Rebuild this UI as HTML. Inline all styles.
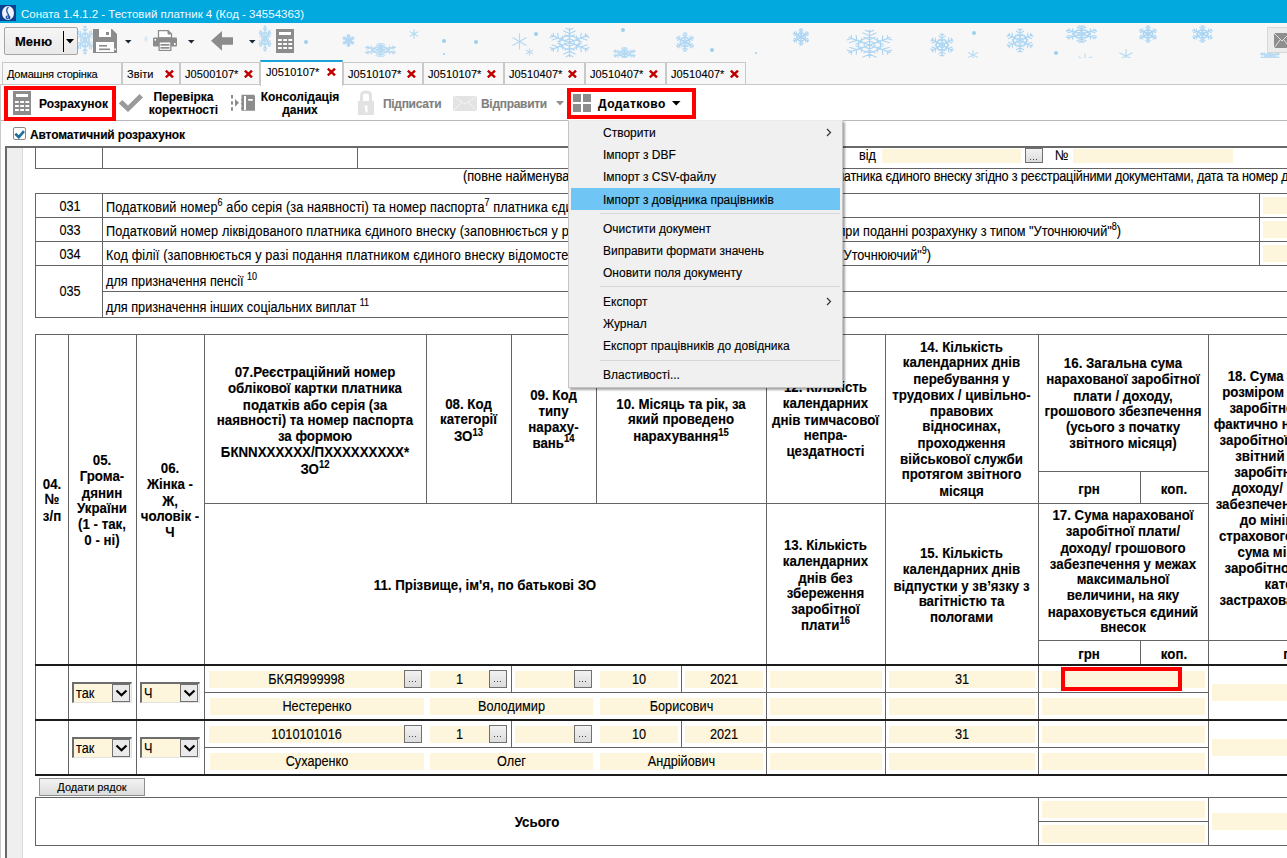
<!DOCTYPE html><html><head><meta charset="utf-8"><style>*{box-sizing:border-box;margin:0;padding:0}
html,body{width:1287px;height:858px;overflow:hidden;background:#fff;font-family:"Liberation Sans",sans-serif;color:#000}
#pg{position:relative;width:1287px;height:858px;overflow:hidden;background:#fff}
.a{position:absolute}
.t{position:absolute;white-space:nowrap}
.tab{position:absolute;top:62px;height:23px;border:1px solid #c9c9c9;border-bottom:none;background:#f8f8f8;font-size:11px;color:#000;letter-spacing:0.1px}
.tab span{position:absolute;top:5px}
.tab svg{position:absolute;top:7px}
.hl{position:absolute;background:#646464;height:1px}
.vl{position:absolute;background:#646464;width:1px}
.hk{position:absolute;background:#1c1c1c;height:2px}
.y{position:absolute;background:#fdf5dc}
.ct{position:absolute;text-align:center;font-weight:bold;font-size:13px;line-height:16px;white-space:nowrap}
.mi{position:absolute;left:603px;font-size:12px;white-space:nowrap;line-height:14px}
.btn{position:absolute;border:1px solid #9a9a9a;border-radius:2px;background:linear-gradient(#f4f4f4,#dedede)}
.dd{position:absolute;font-size:10px;color:#333;text-align:center;line-height:10px}
.tl{position:absolute;font-weight:bold;font-size:12px;white-space:nowrap;line-height:13px}
#pg div{-webkit-text-stroke:0.12px currentColor}
#pg div.ttl{-webkit-text-stroke:0}
</style></head><body><div id="pg">
<div class="a" style="left:0;top:0;width:1287px;height:23px;background:#01a9de"></div>
<div class="a" style="left:0;top:5px;width:16px;height:16px;background:#0d3f8f"></div>
<svg class="a" style="left:0;top:5px" width="16" height="16"><ellipse cx="8" cy="8" rx="6" ry="7" fill="#eef2fa"/><path d="M8.5 2C6 4 6 6 8 9C9.5 11 9 13.5 7.5 13.5C5.5 13.5 5.8 10.8 8 10.8C10 10.8 10.5 13 9 14" stroke="#1e56a8" stroke-width="1.3" fill="none"/></svg>
<div class="t ttl" style="left:21px;top:8px;font-size:11.5px;line-height:13px;color:#f2fbff">Соната 1.4.1.2 - Тестовий платник 4 (Код - 34554363)</div>
<div class="a" style="left:0;top:23px;width:1287px;height:62px;background:#f7f7f7"></div>
<div class="a" style="left:0;top:23px;width:1287px;height:35px;overflow:hidden">
<svg class="a" style="left:76.0px;top:2.0px;opacity:0.8" width="18.0" height="30.0" viewBox="-10.5 -10.5 21 21" preserveAspectRatio="none"><path d="M0 0L0.00 -10.00M0.00 -3.50l2.46 -1.72M0.00 -3.50l-2.46 -1.72M0.00 -6.00l2.87 -2.01M0.00 -6.00l-2.87 -2.01M0.00 -8.50l1.80 -1.26M0.00 -8.50l-1.80 -1.26M0 0L-8.66 -5.00M-3.03 -1.75l-0.26 -2.99M-3.03 -1.75l-2.72 1.27M-5.20 -3.00l-0.31 -3.49M-5.20 -3.00l-3.17 1.48M-7.36 -4.25l-0.19 -2.19M-7.36 -4.25l-1.99 0.93M0 0L-8.66 5.00M-3.03 1.75l-2.72 -1.27M-3.03 1.75l-0.26 2.99M-5.20 3.00l-3.17 -1.48M-5.20 3.00l-0.31 3.49M-7.36 4.25l-1.99 -0.93M-7.36 4.25l-0.19 2.19M0 0L-0.00 10.00M-0.00 3.50l-2.46 1.72M-0.00 3.50l2.46 1.72M-0.00 6.00l-2.87 2.01M-0.00 6.00l2.87 2.01M-0.00 8.50l-1.80 1.26M-0.00 8.50l1.80 1.26M0 0L8.66 5.00M3.03 1.75l0.26 2.99M3.03 1.75l2.72 -1.27M5.20 3.00l0.31 3.49M5.20 3.00l3.17 -1.48M7.36 4.25l0.19 2.19M7.36 4.25l1.99 -0.93M0 0L8.66 -5.00M3.03 -1.75l2.72 1.27M3.03 -1.75l0.26 -2.99M5.20 -3.00l3.17 1.48M5.20 -3.00l0.31 -3.49M7.36 -4.25l1.99 0.93M7.36 -4.25l0.19 -2.19M0.00 -2.50L-2.17 -1.25L-2.17 1.25L-0.00 2.50L2.17 1.25L2.17 -1.25ZM0.00 -5.20L-4.50 -2.60L-4.50 2.60L-0.00 5.20L4.50 2.60L4.50 -2.60Z" stroke="#a3d2f3" stroke-width="1.1" fill="none" vector-effect="non-scaling-stroke"/></svg>
<svg class="a" style="left:258.0px;top:1.5px;opacity:0.8" width="14.0" height="27.0" viewBox="-10.5 -10.5 21 21" preserveAspectRatio="none"><path d="M0 0L0.00 -10.00M0.00 -3.50l2.46 -1.72M0.00 -3.50l-2.46 -1.72M0.00 -6.00l2.87 -2.01M0.00 -6.00l-2.87 -2.01M0.00 -8.50l1.80 -1.26M0.00 -8.50l-1.80 -1.26M0 0L-8.66 -5.00M-3.03 -1.75l-0.26 -2.99M-3.03 -1.75l-2.72 1.27M-5.20 -3.00l-0.31 -3.49M-5.20 -3.00l-3.17 1.48M-7.36 -4.25l-0.19 -2.19M-7.36 -4.25l-1.99 0.93M0 0L-8.66 5.00M-3.03 1.75l-2.72 -1.27M-3.03 1.75l-0.26 2.99M-5.20 3.00l-3.17 -1.48M-5.20 3.00l-0.31 3.49M-7.36 4.25l-1.99 -0.93M-7.36 4.25l-0.19 2.19M0 0L-0.00 10.00M-0.00 3.50l-2.46 1.72M-0.00 3.50l2.46 1.72M-0.00 6.00l-2.87 2.01M-0.00 6.00l2.87 2.01M-0.00 8.50l-1.80 1.26M-0.00 8.50l1.80 1.26M0 0L8.66 5.00M3.03 1.75l0.26 2.99M3.03 1.75l2.72 -1.27M5.20 3.00l0.31 3.49M5.20 3.00l3.17 -1.48M7.36 4.25l0.19 2.19M7.36 4.25l1.99 -0.93M0 0L8.66 -5.00M3.03 -1.75l2.72 1.27M3.03 -1.75l0.26 -2.99M5.20 -3.00l3.17 1.48M5.20 -3.00l0.31 -3.49M7.36 -4.25l1.99 0.93M7.36 -4.25l0.19 -2.19M0.00 -2.50L-2.17 -1.25L-2.17 1.25L-0.00 2.50L2.17 1.25L2.17 -1.25ZM0.00 -5.20L-4.50 -2.60L-4.50 2.60L-0.00 5.20L4.50 2.60L4.50 -2.60Z" stroke="#a3d2f3" stroke-width="1.1" fill="none" vector-effect="non-scaling-stroke"/></svg>
<svg class="a" style="left:144.0px;top:13.0px;opacity:0.4" width="4.0" height="6.0" viewBox="-10.5 -10.5 21 21" preserveAspectRatio="none"><path d="M0 0L0.00 -10.00M0 0L-8.66 -5.00M0 0L-8.66 5.00M0 0L-0.00 10.00M0 0L8.66 5.00M0 0L8.66 -5.00" stroke="#a3d2f3" stroke-width="1.1" fill="none" vector-effect="non-scaling-stroke"/></svg>
<svg class="a" style="left:341.5px;top:10.5px;opacity:0.85" width="13.0" height="13.0" viewBox="-10.5 -10.5 21 21" preserveAspectRatio="none"><path d="M0 0L0.00 -10.00M0.00 -3.50l2.46 -1.72M0.00 -3.50l-2.46 -1.72M0.00 -6.00l2.87 -2.01M0.00 -6.00l-2.87 -2.01M0.00 -8.50l1.80 -1.26M0.00 -8.50l-1.80 -1.26M0 0L-8.66 -5.00M-3.03 -1.75l-0.26 -2.99M-3.03 -1.75l-2.72 1.27M-5.20 -3.00l-0.31 -3.49M-5.20 -3.00l-3.17 1.48M-7.36 -4.25l-0.19 -2.19M-7.36 -4.25l-1.99 0.93M0 0L-8.66 5.00M-3.03 1.75l-2.72 -1.27M-3.03 1.75l-0.26 2.99M-5.20 3.00l-3.17 -1.48M-5.20 3.00l-0.31 3.49M-7.36 4.25l-1.99 -0.93M-7.36 4.25l-0.19 2.19M0 0L-0.00 10.00M-0.00 3.50l-2.46 1.72M-0.00 3.50l2.46 1.72M-0.00 6.00l-2.87 2.01M-0.00 6.00l2.87 2.01M-0.00 8.50l-1.80 1.26M-0.00 8.50l1.80 1.26M0 0L8.66 5.00M3.03 1.75l0.26 2.99M3.03 1.75l2.72 -1.27M5.20 3.00l0.31 3.49M5.20 3.00l3.17 -1.48M7.36 4.25l0.19 2.19M7.36 4.25l1.99 -0.93M0 0L8.66 -5.00M3.03 -1.75l2.72 1.27M3.03 -1.75l0.26 -2.99M5.20 -3.00l3.17 1.48M5.20 -3.00l0.31 -3.49M7.36 -4.25l1.99 0.93M7.36 -4.25l0.19 -2.19M0.00 -2.50L-2.17 -1.25L-2.17 1.25L-0.00 2.50L2.17 1.25L2.17 -1.25ZM0.00 -5.20L-4.50 -2.60L-4.50 2.60L-0.00 5.20L4.50 2.60L4.50 -2.60Z" stroke="#a3d2f3" stroke-width="1.1" fill="none" vector-effect="non-scaling-stroke"/></svg>
<svg class="a" style="left:362.5px;top:20.0px;opacity:0.8" width="35.0" height="14.0" viewBox="-10.5 -10.5 21 21" preserveAspectRatio="none"><path d="M0 0L0.00 -10.00M0.00 -3.50l2.46 -1.72M0.00 -3.50l-2.46 -1.72M0.00 -6.00l2.87 -2.01M0.00 -6.00l-2.87 -2.01M0.00 -8.50l1.80 -1.26M0.00 -8.50l-1.80 -1.26M0 0L-8.66 -5.00M-3.03 -1.75l-0.26 -2.99M-3.03 -1.75l-2.72 1.27M-5.20 -3.00l-0.31 -3.49M-5.20 -3.00l-3.17 1.48M-7.36 -4.25l-0.19 -2.19M-7.36 -4.25l-1.99 0.93M0 0L-8.66 5.00M-3.03 1.75l-2.72 -1.27M-3.03 1.75l-0.26 2.99M-5.20 3.00l-3.17 -1.48M-5.20 3.00l-0.31 3.49M-7.36 4.25l-1.99 -0.93M-7.36 4.25l-0.19 2.19M0 0L-0.00 10.00M-0.00 3.50l-2.46 1.72M-0.00 3.50l2.46 1.72M-0.00 6.00l-2.87 2.01M-0.00 6.00l2.87 2.01M-0.00 8.50l-1.80 1.26M-0.00 8.50l1.80 1.26M0 0L8.66 5.00M3.03 1.75l0.26 2.99M3.03 1.75l2.72 -1.27M5.20 3.00l0.31 3.49M5.20 3.00l3.17 -1.48M7.36 4.25l0.19 2.19M7.36 4.25l1.99 -0.93M0 0L8.66 -5.00M3.03 -1.75l2.72 1.27M3.03 -1.75l0.26 -2.99M5.20 -3.00l3.17 1.48M5.20 -3.00l0.31 -3.49M7.36 -4.25l1.99 0.93M7.36 -4.25l0.19 -2.19M0.00 -2.50L-2.17 -1.25L-2.17 1.25L-0.00 2.50L2.17 1.25L2.17 -1.25ZM0.00 -5.20L-4.50 -2.60L-4.50 2.60L-0.00 5.20L4.50 2.60L4.50 -2.60Z" stroke="#a3d2f3" stroke-width="1.1" fill="none" vector-effect="non-scaling-stroke"/></svg>
<svg class="a" style="left:409.0px;top:6.0px;opacity:0.8" width="10.0" height="10.0" viewBox="-10.5 -10.5 21 21" preserveAspectRatio="none"><path d="M0 0L0.00 -10.00M0 0L-8.66 -5.00M0 0L-8.66 5.00M0 0L-0.00 10.00M0 0L8.66 5.00M0 0L8.66 -5.00" stroke="#a3d2f3" stroke-width="1.1" fill="none" vector-effect="non-scaling-stroke"/></svg>
<svg class="a" style="left:510.5px;top:9.5px;opacity:0.8" width="17.0" height="17.0" viewBox="-10.5 -10.5 21 21" preserveAspectRatio="none"><path d="M0 0L0.00 -10.00M0 0L-8.66 -5.00M0 0L-8.66 5.00M0 0L-0.00 10.00M0 0L8.66 5.00M0 0L8.66 -5.00" stroke="#a3d2f3" stroke-width="1.1" fill="none" vector-effect="non-scaling-stroke"/></svg>
<svg class="a" style="left:524.5px;top:25.0px;opacity:0.7" width="9.0" height="8.0" viewBox="-10.5 -10.5 21 21" preserveAspectRatio="none"><path d="M0 0L0.00 -10.00M0 0L-8.66 -5.00M0 0L-8.66 5.00M0 0L-0.00 10.00M0 0L8.66 5.00M0 0L8.66 -5.00" stroke="#a3d2f3" stroke-width="1.1" fill="none" vector-effect="non-scaling-stroke"/></svg>
<svg class="a" style="left:546.5px;top:3.5px;opacity:0.9" width="45.0" height="31.0" viewBox="-10.5 -10.5 21 21" preserveAspectRatio="none"><path d="M0 0L0.00 -10.00M0.00 -3.50l2.46 -1.72M0.00 -3.50l-2.46 -1.72M0.00 -6.00l2.87 -2.01M0.00 -6.00l-2.87 -2.01M0.00 -8.50l1.80 -1.26M0.00 -8.50l-1.80 -1.26M0 0L-8.66 -5.00M-3.03 -1.75l-0.26 -2.99M-3.03 -1.75l-2.72 1.27M-5.20 -3.00l-0.31 -3.49M-5.20 -3.00l-3.17 1.48M-7.36 -4.25l-0.19 -2.19M-7.36 -4.25l-1.99 0.93M0 0L-8.66 5.00M-3.03 1.75l-2.72 -1.27M-3.03 1.75l-0.26 2.99M-5.20 3.00l-3.17 -1.48M-5.20 3.00l-0.31 3.49M-7.36 4.25l-1.99 -0.93M-7.36 4.25l-0.19 2.19M0 0L-0.00 10.00M-0.00 3.50l-2.46 1.72M-0.00 3.50l2.46 1.72M-0.00 6.00l-2.87 2.01M-0.00 6.00l2.87 2.01M-0.00 8.50l-1.80 1.26M-0.00 8.50l1.80 1.26M0 0L8.66 5.00M3.03 1.75l0.26 2.99M3.03 1.75l2.72 -1.27M5.20 3.00l0.31 3.49M5.20 3.00l3.17 -1.48M7.36 4.25l0.19 2.19M7.36 4.25l1.99 -0.93M0 0L8.66 -5.00M3.03 -1.75l2.72 1.27M3.03 -1.75l0.26 -2.99M5.20 -3.00l3.17 1.48M5.20 -3.00l0.31 -3.49M7.36 -4.25l1.99 0.93M7.36 -4.25l0.19 -2.19M0.00 -2.50L-2.17 -1.25L-2.17 1.25L-0.00 2.50L2.17 1.25L2.17 -1.25ZM0.00 -5.20L-4.50 -2.60L-4.50 2.60L-0.00 5.20L4.50 2.60L4.50 -2.60Z" stroke="#a3d2f3" stroke-width="1.1" fill="none" vector-effect="non-scaling-stroke"/></svg>
<svg class="a" style="left:611.5px;top:23.5px;opacity:0.8" width="25.0" height="13.0" viewBox="-10.5 -10.5 21 21" preserveAspectRatio="none"><path d="M0 0L0.00 -10.00M0.00 -3.50l2.46 -1.72M0.00 -3.50l-2.46 -1.72M0.00 -6.00l2.87 -2.01M0.00 -6.00l-2.87 -2.01M0.00 -8.50l1.80 -1.26M0.00 -8.50l-1.80 -1.26M0 0L-8.66 -5.00M-3.03 -1.75l-0.26 -2.99M-3.03 -1.75l-2.72 1.27M-5.20 -3.00l-0.31 -3.49M-5.20 -3.00l-3.17 1.48M-7.36 -4.25l-0.19 -2.19M-7.36 -4.25l-1.99 0.93M0 0L-8.66 5.00M-3.03 1.75l-2.72 -1.27M-3.03 1.75l-0.26 2.99M-5.20 3.00l-3.17 -1.48M-5.20 3.00l-0.31 3.49M-7.36 4.25l-1.99 -0.93M-7.36 4.25l-0.19 2.19M0 0L-0.00 10.00M-0.00 3.50l-2.46 1.72M-0.00 3.50l2.46 1.72M-0.00 6.00l-2.87 2.01M-0.00 6.00l2.87 2.01M-0.00 8.50l-1.80 1.26M-0.00 8.50l1.80 1.26M0 0L8.66 5.00M3.03 1.75l0.26 2.99M3.03 1.75l2.72 -1.27M5.20 3.00l0.31 3.49M5.20 3.00l3.17 -1.48M7.36 4.25l0.19 2.19M7.36 4.25l1.99 -0.93M0 0L8.66 -5.00M3.03 -1.75l2.72 1.27M3.03 -1.75l0.26 -2.99M5.20 -3.00l3.17 1.48M5.20 -3.00l0.31 -3.49M7.36 -4.25l1.99 0.93M7.36 -4.25l0.19 -2.19M0.00 -2.50L-2.17 -1.25L-2.17 1.25L-0.00 2.50L2.17 1.25L2.17 -1.25ZM0.00 -5.20L-4.50 -2.60L-4.50 2.60L-0.00 5.20L4.50 2.60L4.50 -2.60Z" stroke="#a3d2f3" stroke-width="1.1" fill="none" vector-effect="non-scaling-stroke"/></svg>
<svg class="a" style="left:675.0px;top:9.0px;opacity:0.85" width="20.0" height="20.0" viewBox="-10.5 -10.5 21 21" preserveAspectRatio="none"><path d="M0 0L0.00 -10.00M0.00 -3.50l2.46 -1.72M0.00 -3.50l-2.46 -1.72M0.00 -6.00l2.87 -2.01M0.00 -6.00l-2.87 -2.01M0.00 -8.50l1.80 -1.26M0.00 -8.50l-1.80 -1.26M0 0L-8.66 -5.00M-3.03 -1.75l-0.26 -2.99M-3.03 -1.75l-2.72 1.27M-5.20 -3.00l-0.31 -3.49M-5.20 -3.00l-3.17 1.48M-7.36 -4.25l-0.19 -2.19M-7.36 -4.25l-1.99 0.93M0 0L-8.66 5.00M-3.03 1.75l-2.72 -1.27M-3.03 1.75l-0.26 2.99M-5.20 3.00l-3.17 -1.48M-5.20 3.00l-0.31 3.49M-7.36 4.25l-1.99 -0.93M-7.36 4.25l-0.19 2.19M0 0L-0.00 10.00M-0.00 3.50l-2.46 1.72M-0.00 3.50l2.46 1.72M-0.00 6.00l-2.87 2.01M-0.00 6.00l2.87 2.01M-0.00 8.50l-1.80 1.26M-0.00 8.50l1.80 1.26M0 0L8.66 5.00M3.03 1.75l0.26 2.99M3.03 1.75l2.72 -1.27M5.20 3.00l0.31 3.49M5.20 3.00l3.17 -1.48M7.36 4.25l0.19 2.19M7.36 4.25l1.99 -0.93M0 0L8.66 -5.00M3.03 -1.75l2.72 1.27M3.03 -1.75l0.26 -2.99M5.20 -3.00l3.17 1.48M5.20 -3.00l0.31 -3.49M7.36 -4.25l1.99 0.93M7.36 -4.25l0.19 -2.19M0.00 -2.50L-2.17 -1.25L-2.17 1.25L-0.00 2.50L2.17 1.25L2.17 -1.25ZM0.00 -5.20L-4.50 -2.60L-4.50 2.60L-0.00 5.20L4.50 2.60L4.50 -2.60Z" stroke="#a3d2f3" stroke-width="1.1" fill="none" vector-effect="non-scaling-stroke"/></svg>
<svg class="a" style="left:792.0px;top:5.0px;opacity:0.9" width="18.0" height="18.0" viewBox="-10.5 -10.5 21 21" preserveAspectRatio="none"><path d="M0 0L0.00 -10.00M0.00 -3.50l2.46 -1.72M0.00 -3.50l-2.46 -1.72M0.00 -6.00l2.87 -2.01M0.00 -6.00l-2.87 -2.01M0.00 -8.50l1.80 -1.26M0.00 -8.50l-1.80 -1.26M0 0L-8.66 -5.00M-3.03 -1.75l-0.26 -2.99M-3.03 -1.75l-2.72 1.27M-5.20 -3.00l-0.31 -3.49M-5.20 -3.00l-3.17 1.48M-7.36 -4.25l-0.19 -2.19M-7.36 -4.25l-1.99 0.93M0 0L-8.66 5.00M-3.03 1.75l-2.72 -1.27M-3.03 1.75l-0.26 2.99M-5.20 3.00l-3.17 -1.48M-5.20 3.00l-0.31 3.49M-7.36 4.25l-1.99 -0.93M-7.36 4.25l-0.19 2.19M0 0L-0.00 10.00M-0.00 3.50l-2.46 1.72M-0.00 3.50l2.46 1.72M-0.00 6.00l-2.87 2.01M-0.00 6.00l2.87 2.01M-0.00 8.50l-1.80 1.26M-0.00 8.50l1.80 1.26M0 0L8.66 5.00M3.03 1.75l0.26 2.99M3.03 1.75l2.72 -1.27M5.20 3.00l0.31 3.49M5.20 3.00l3.17 -1.48M7.36 4.25l0.19 2.19M7.36 4.25l1.99 -0.93M0 0L8.66 -5.00M3.03 -1.75l2.72 1.27M3.03 -1.75l0.26 -2.99M5.20 -3.00l3.17 1.48M5.20 -3.00l0.31 -3.49M7.36 -4.25l1.99 0.93M7.36 -4.25l0.19 -2.19M0.00 -2.50L-2.17 -1.25L-2.17 1.25L-0.00 2.50L2.17 1.25L2.17 -1.25ZM0.00 -5.20L-4.50 -2.60L-4.50 2.60L-0.00 5.20L4.50 2.60L4.50 -2.60Z" stroke="#a3d2f3" stroke-width="1.1" fill="none" vector-effect="non-scaling-stroke"/></svg>
<svg class="a" style="left:843.5px;top:6.0px;opacity:0.9" width="51.0" height="32.0" viewBox="-10.5 -10.5 21 21" preserveAspectRatio="none"><path d="M0 0L0.00 -10.00M0.00 -3.50l2.46 -1.72M0.00 -3.50l-2.46 -1.72M0.00 -6.00l2.87 -2.01M0.00 -6.00l-2.87 -2.01M0.00 -8.50l1.80 -1.26M0.00 -8.50l-1.80 -1.26M0 0L-8.66 -5.00M-3.03 -1.75l-0.26 -2.99M-3.03 -1.75l-2.72 1.27M-5.20 -3.00l-0.31 -3.49M-5.20 -3.00l-3.17 1.48M-7.36 -4.25l-0.19 -2.19M-7.36 -4.25l-1.99 0.93M0 0L-8.66 5.00M-3.03 1.75l-2.72 -1.27M-3.03 1.75l-0.26 2.99M-5.20 3.00l-3.17 -1.48M-5.20 3.00l-0.31 3.49M-7.36 4.25l-1.99 -0.93M-7.36 4.25l-0.19 2.19M0 0L-0.00 10.00M-0.00 3.50l-2.46 1.72M-0.00 3.50l2.46 1.72M-0.00 6.00l-2.87 2.01M-0.00 6.00l2.87 2.01M-0.00 8.50l-1.80 1.26M-0.00 8.50l1.80 1.26M0 0L8.66 5.00M3.03 1.75l0.26 2.99M3.03 1.75l2.72 -1.27M5.20 3.00l0.31 3.49M5.20 3.00l3.17 -1.48M7.36 4.25l0.19 2.19M7.36 4.25l1.99 -0.93M0 0L8.66 -5.00M3.03 -1.75l2.72 1.27M3.03 -1.75l0.26 -2.99M5.20 -3.00l3.17 1.48M5.20 -3.00l0.31 -3.49M7.36 -4.25l1.99 0.93M7.36 -4.25l0.19 -2.19M0.00 -2.50L-2.17 -1.25L-2.17 1.25L-0.00 2.50L2.17 1.25L2.17 -1.25ZM0.00 -5.20L-4.50 -2.60L-4.50 2.60L-0.00 5.20L4.50 2.60L4.50 -2.60Z" stroke="#a3d2f3" stroke-width="1.1" fill="none" vector-effect="non-scaling-stroke"/></svg>
<svg class="a" style="left:929.0px;top:10.0px;opacity:0.9" width="26.0" height="24.0" viewBox="-10.5 -10.5 21 21" preserveAspectRatio="none"><path d="M0 0L0.00 -10.00M0.00 -3.50l2.46 -1.72M0.00 -3.50l-2.46 -1.72M0.00 -6.00l2.87 -2.01M0.00 -6.00l-2.87 -2.01M0.00 -8.50l1.80 -1.26M0.00 -8.50l-1.80 -1.26M0 0L-8.66 -5.00M-3.03 -1.75l-0.26 -2.99M-3.03 -1.75l-2.72 1.27M-5.20 -3.00l-0.31 -3.49M-5.20 -3.00l-3.17 1.48M-7.36 -4.25l-0.19 -2.19M-7.36 -4.25l-1.99 0.93M0 0L-8.66 5.00M-3.03 1.75l-2.72 -1.27M-3.03 1.75l-0.26 2.99M-5.20 3.00l-3.17 -1.48M-5.20 3.00l-0.31 3.49M-7.36 4.25l-1.99 -0.93M-7.36 4.25l-0.19 2.19M0 0L-0.00 10.00M-0.00 3.50l-2.46 1.72M-0.00 3.50l2.46 1.72M-0.00 6.00l-2.87 2.01M-0.00 6.00l2.87 2.01M-0.00 8.50l-1.80 1.26M-0.00 8.50l1.80 1.26M0 0L8.66 5.00M3.03 1.75l0.26 2.99M3.03 1.75l2.72 -1.27M5.20 3.00l0.31 3.49M5.20 3.00l3.17 -1.48M7.36 4.25l0.19 2.19M7.36 4.25l1.99 -0.93M0 0L8.66 -5.00M3.03 -1.75l2.72 1.27M3.03 -1.75l0.26 -2.99M5.20 -3.00l3.17 1.48M5.20 -3.00l0.31 -3.49M7.36 -4.25l1.99 0.93M7.36 -4.25l0.19 -2.19M0.00 -2.50L-2.17 -1.25L-2.17 1.25L-0.00 2.50L2.17 1.25L2.17 -1.25ZM0.00 -5.20L-4.50 -2.60L-4.50 2.60L-0.00 5.20L4.50 2.60L4.50 -2.60Z" stroke="#a3d2f3" stroke-width="1.1" fill="none" vector-effect="non-scaling-stroke"/></svg>
<svg class="a" style="left:967.0px;top:27.0px;opacity:0.7" width="12.0" height="10.0" viewBox="-10.5 -10.5 21 21" preserveAspectRatio="none"><path d="M0 0L0.00 -10.00M0 0L-8.66 -5.00M0 0L-8.66 5.00M0 0L-0.00 10.00M0 0L8.66 5.00M0 0L8.66 -5.00" stroke="#a3d2f3" stroke-width="1.1" fill="none" vector-effect="non-scaling-stroke"/></svg>
<svg class="a" style="left:1005.0px;top:4.5px;opacity:0.9" width="30.0" height="25.0" viewBox="-10.5 -10.5 21 21" preserveAspectRatio="none"><path d="M0 0L0.00 -10.00M0.00 -3.50l2.46 -1.72M0.00 -3.50l-2.46 -1.72M0.00 -6.00l2.87 -2.01M0.00 -6.00l-2.87 -2.01M0.00 -8.50l1.80 -1.26M0.00 -8.50l-1.80 -1.26M0 0L-8.66 -5.00M-3.03 -1.75l-0.26 -2.99M-3.03 -1.75l-2.72 1.27M-5.20 -3.00l-0.31 -3.49M-5.20 -3.00l-3.17 1.48M-7.36 -4.25l-0.19 -2.19M-7.36 -4.25l-1.99 0.93M0 0L-8.66 5.00M-3.03 1.75l-2.72 -1.27M-3.03 1.75l-0.26 2.99M-5.20 3.00l-3.17 -1.48M-5.20 3.00l-0.31 3.49M-7.36 4.25l-1.99 -0.93M-7.36 4.25l-0.19 2.19M0 0L-0.00 10.00M-0.00 3.50l-2.46 1.72M-0.00 3.50l2.46 1.72M-0.00 6.00l-2.87 2.01M-0.00 6.00l2.87 2.01M-0.00 8.50l-1.80 1.26M-0.00 8.50l1.80 1.26M0 0L8.66 5.00M3.03 1.75l0.26 2.99M3.03 1.75l2.72 -1.27M5.20 3.00l0.31 3.49M5.20 3.00l3.17 -1.48M7.36 4.25l0.19 2.19M7.36 4.25l1.99 -0.93M0 0L8.66 -5.00M3.03 -1.75l2.72 1.27M3.03 -1.75l0.26 -2.99M5.20 -3.00l3.17 1.48M5.20 -3.00l0.31 -3.49M7.36 -4.25l1.99 0.93M7.36 -4.25l0.19 -2.19M0.00 -2.50L-2.17 -1.25L-2.17 1.25L-0.00 2.50L2.17 1.25L2.17 -1.25ZM0.00 -5.20L-4.50 -2.60L-4.50 2.60L-0.00 5.20L4.50 2.60L4.50 -2.60Z" stroke="#a3d2f3" stroke-width="1.1" fill="none" vector-effect="non-scaling-stroke"/></svg>
<svg class="a" style="left:1063.5px;top:2.0px;opacity:0.9" width="35.0" height="18.0" viewBox="-10.5 -10.5 21 21" preserveAspectRatio="none"><path d="M0 0L0.00 -10.00M0.00 -3.50l2.46 -1.72M0.00 -3.50l-2.46 -1.72M0.00 -6.00l2.87 -2.01M0.00 -6.00l-2.87 -2.01M0.00 -8.50l1.80 -1.26M0.00 -8.50l-1.80 -1.26M0 0L-8.66 -5.00M-3.03 -1.75l-0.26 -2.99M-3.03 -1.75l-2.72 1.27M-5.20 -3.00l-0.31 -3.49M-5.20 -3.00l-3.17 1.48M-7.36 -4.25l-0.19 -2.19M-7.36 -4.25l-1.99 0.93M0 0L-8.66 5.00M-3.03 1.75l-2.72 -1.27M-3.03 1.75l-0.26 2.99M-5.20 3.00l-3.17 -1.48M-5.20 3.00l-0.31 3.49M-7.36 4.25l-1.99 -0.93M-7.36 4.25l-0.19 2.19M0 0L-0.00 10.00M-0.00 3.50l-2.46 1.72M-0.00 3.50l2.46 1.72M-0.00 6.00l-2.87 2.01M-0.00 6.00l2.87 2.01M-0.00 8.50l-1.80 1.26M-0.00 8.50l1.80 1.26M0 0L8.66 5.00M3.03 1.75l0.26 2.99M3.03 1.75l2.72 -1.27M5.20 3.00l0.31 3.49M5.20 3.00l3.17 -1.48M7.36 4.25l0.19 2.19M7.36 4.25l1.99 -0.93M0 0L8.66 -5.00M3.03 -1.75l2.72 1.27M3.03 -1.75l0.26 -2.99M5.20 -3.00l3.17 1.48M5.20 -3.00l0.31 -3.49M7.36 -4.25l1.99 0.93M7.36 -4.25l0.19 -2.19M0.00 -2.50L-2.17 -1.25L-2.17 1.25L-0.00 2.50L2.17 1.25L2.17 -1.25ZM0.00 -5.20L-4.50 -2.60L-4.50 2.60L-0.00 5.20L4.50 2.60L4.50 -2.60Z" stroke="#a3d2f3" stroke-width="1.1" fill="none" vector-effect="non-scaling-stroke"/></svg>
<svg class="a" style="left:1077.0px;top:30.0px;opacity:0.7" width="16.0" height="14.0" viewBox="-10.5 -10.5 21 21" preserveAspectRatio="none"><path d="M0 0L0.00 -10.00M0 0L-8.66 -5.00M0 0L-8.66 5.00M0 0L-0.00 10.00M0 0L8.66 5.00M0 0L8.66 -5.00" stroke="#a3d2f3" stroke-width="1.1" fill="none" vector-effect="non-scaling-stroke"/></svg>
<svg class="a" style="left:1118.0px;top:26.0px;opacity:0.8" width="16.0" height="14.0" viewBox="-10.5 -10.5 21 21" preserveAspectRatio="none"><path d="M0 0L0.00 -10.00M0 0L-8.66 -5.00M0 0L-8.66 5.00M0 0L-0.00 10.00M0 0L8.66 5.00M0 0L8.66 -5.00" stroke="#a3d2f3" stroke-width="1.1" fill="none" vector-effect="non-scaling-stroke"/></svg>
<svg class="a" style="left:1138.0px;top:2.0px;opacity:0.9" width="20.0" height="18.0" viewBox="-10.5 -10.5 21 21" preserveAspectRatio="none"><path d="M0 0L0.00 -10.00M0.00 -3.50l2.46 -1.72M0.00 -3.50l-2.46 -1.72M0.00 -6.00l2.87 -2.01M0.00 -6.00l-2.87 -2.01M0.00 -8.50l1.80 -1.26M0.00 -8.50l-1.80 -1.26M0 0L-8.66 -5.00M-3.03 -1.75l-0.26 -2.99M-3.03 -1.75l-2.72 1.27M-5.20 -3.00l-0.31 -3.49M-5.20 -3.00l-3.17 1.48M-7.36 -4.25l-0.19 -2.19M-7.36 -4.25l-1.99 0.93M0 0L-8.66 5.00M-3.03 1.75l-2.72 -1.27M-3.03 1.75l-0.26 2.99M-5.20 3.00l-3.17 -1.48M-5.20 3.00l-0.31 3.49M-7.36 4.25l-1.99 -0.93M-7.36 4.25l-0.19 2.19M0 0L-0.00 10.00M-0.00 3.50l-2.46 1.72M-0.00 3.50l2.46 1.72M-0.00 6.00l-2.87 2.01M-0.00 6.00l2.87 2.01M-0.00 8.50l-1.80 1.26M-0.00 8.50l1.80 1.26M0 0L8.66 5.00M3.03 1.75l0.26 2.99M3.03 1.75l2.72 -1.27M5.20 3.00l0.31 3.49M5.20 3.00l3.17 -1.48M7.36 4.25l0.19 2.19M7.36 4.25l1.99 -0.93M0 0L8.66 -5.00M3.03 -1.75l2.72 1.27M3.03 -1.75l0.26 -2.99M5.20 -3.00l3.17 1.48M5.20 -3.00l0.31 -3.49M7.36 -4.25l1.99 0.93M7.36 -4.25l0.19 -2.19M0.00 -2.50L-2.17 -1.25L-2.17 1.25L-0.00 2.50L2.17 1.25L2.17 -1.25ZM0.00 -5.20L-4.50 -2.60L-4.50 2.60L-0.00 5.20L4.50 2.60L4.50 -2.60Z" stroke="#a3d2f3" stroke-width="1.1" fill="none" vector-effect="non-scaling-stroke"/></svg>
<svg class="a" style="left:1190.5px;top:2.0px;opacity:0.9" width="23.0" height="18.0" viewBox="-10.5 -10.5 21 21" preserveAspectRatio="none"><path d="M0 0L0.00 -10.00M0.00 -3.50l2.46 -1.72M0.00 -3.50l-2.46 -1.72M0.00 -6.00l2.87 -2.01M0.00 -6.00l-2.87 -2.01M0.00 -8.50l1.80 -1.26M0.00 -8.50l-1.80 -1.26M0 0L-8.66 -5.00M-3.03 -1.75l-0.26 -2.99M-3.03 -1.75l-2.72 1.27M-5.20 -3.00l-0.31 -3.49M-5.20 -3.00l-3.17 1.48M-7.36 -4.25l-0.19 -2.19M-7.36 -4.25l-1.99 0.93M0 0L-8.66 5.00M-3.03 1.75l-2.72 -1.27M-3.03 1.75l-0.26 2.99M-5.20 3.00l-3.17 -1.48M-5.20 3.00l-0.31 3.49M-7.36 4.25l-1.99 -0.93M-7.36 4.25l-0.19 2.19M0 0L-0.00 10.00M-0.00 3.50l-2.46 1.72M-0.00 3.50l2.46 1.72M-0.00 6.00l-2.87 2.01M-0.00 6.00l2.87 2.01M-0.00 8.50l-1.80 1.26M-0.00 8.50l1.80 1.26M0 0L8.66 5.00M3.03 1.75l0.26 2.99M3.03 1.75l2.72 -1.27M5.20 3.00l0.31 3.49M5.20 3.00l3.17 -1.48M7.36 4.25l0.19 2.19M7.36 4.25l1.99 -0.93M0 0L8.66 -5.00M3.03 -1.75l2.72 1.27M3.03 -1.75l0.26 -2.99M5.20 -3.00l3.17 1.48M5.20 -3.00l0.31 -3.49M7.36 -4.25l1.99 0.93M7.36 -4.25l0.19 -2.19M0.00 -2.50L-2.17 -1.25L-2.17 1.25L-0.00 2.50L2.17 1.25L2.17 -1.25ZM0.00 -5.20L-4.50 -2.60L-4.50 2.60L-0.00 5.20L4.50 2.60L4.50 -2.60Z" stroke="#a3d2f3" stroke-width="1.1" fill="none" vector-effect="non-scaling-stroke"/></svg>
<svg class="a" style="left:1259.0px;top:27.0px;opacity:0.8" width="22.0" height="12.0" viewBox="-10.5 -10.5 21 21" preserveAspectRatio="none"><path d="M0 0L0.00 -10.00M0.00 -3.50l2.46 -1.72M0.00 -3.50l-2.46 -1.72M0.00 -6.00l2.87 -2.01M0.00 -6.00l-2.87 -2.01M0.00 -8.50l1.80 -1.26M0.00 -8.50l-1.80 -1.26M0 0L-8.66 -5.00M-3.03 -1.75l-0.26 -2.99M-3.03 -1.75l-2.72 1.27M-5.20 -3.00l-0.31 -3.49M-5.20 -3.00l-3.17 1.48M-7.36 -4.25l-0.19 -2.19M-7.36 -4.25l-1.99 0.93M0 0L-8.66 5.00M-3.03 1.75l-2.72 -1.27M-3.03 1.75l-0.26 2.99M-5.20 3.00l-3.17 -1.48M-5.20 3.00l-0.31 3.49M-7.36 4.25l-1.99 -0.93M-7.36 4.25l-0.19 2.19M0 0L-0.00 10.00M-0.00 3.50l-2.46 1.72M-0.00 3.50l2.46 1.72M-0.00 6.00l-2.87 2.01M-0.00 6.00l2.87 2.01M-0.00 8.50l-1.80 1.26M-0.00 8.50l1.80 1.26M0 0L8.66 5.00M3.03 1.75l0.26 2.99M3.03 1.75l2.72 -1.27M5.20 3.00l0.31 3.49M5.20 3.00l3.17 -1.48M7.36 4.25l0.19 2.19M7.36 4.25l1.99 -0.93M0 0L8.66 -5.00M3.03 -1.75l2.72 1.27M3.03 -1.75l0.26 -2.99M5.20 -3.00l3.17 1.48M5.20 -3.00l0.31 -3.49M7.36 -4.25l1.99 0.93M7.36 -4.25l0.19 -2.19M0.00 -2.50L-2.17 -1.25L-2.17 1.25L-0.00 2.50L2.17 1.25L2.17 -1.25ZM0.00 -5.20L-4.50 -2.60L-4.50 2.60L-0.00 5.20L4.50 2.60L4.50 -2.60Z" stroke="#a3d2f3" stroke-width="1.1" fill="none" vector-effect="non-scaling-stroke"/></svg>
<div class="a" style="left:304px;top:17px;width:4px;height:4px;border-radius:50%;background:#9ccff0;opacity:1.0"></div>
<div class="a" style="left:442px;top:16px;width:4px;height:4px;border-radius:50%;background:#9ccff0;opacity:1.0"></div>
<div class="a" style="left:443px;top:30px;width:2px;height:2px;border-radius:50%;background:#9ccff0;opacity:1.0"></div>
<div class="a" style="left:474px;top:17px;width:4px;height:4px;border-radius:50%;background:#9ccff0;opacity:1.0"></div>
<div class="a" style="left:534px;top:9px;width:4px;height:4px;border-radius:50%;background:#9ccff0;opacity:1.0"></div>
<div class="a" style="left:621px;top:5px;width:4px;height:4px;border-radius:50%;background:#9ccff0;opacity:1.0"></div>
<div class="a" style="left:710px;top:25px;width:4px;height:4px;border-radius:50%;background:#9ccff0;opacity:1.0"></div>
<div class="a" style="left:755px;top:29px;width:2px;height:2px;border-radius:50%;background:#9ccff0;opacity:1.0"></div>
<div class="a" style="left:972px;top:8px;width:4px;height:4px;border-radius:50%;background:#9ccff0;opacity:1.0"></div>
<div class="a" style="left:1054px;top:28px;width:4px;height:4px;border-radius:50%;background:#9ccff0;opacity:1.0"></div>
</div>
<div class="a" style="left:0;top:84px;width:1287px;height:1px;background:#c8c8c8"></div>
<div class="btn" style="left:4px;top:27px;width:74px;height:28px;border-color:#a6a6a6;background:linear-gradient(#f6f6f6,#e9e9e9)"></div>
<div class="t" style="left:15px;top:34px;font-size:13px;font-weight:bold">Меню</div>
<div class="a" style="left:63px;top:31px;width:1px;height:21px;background:#000"></div>
<svg class="a" style="left:66px;top:39px" width="9" height="5"><path d="M0 0H8L4 4.5Z" fill="#000"/></svg>
<svg class="a" style="left:93px;top:29px" width="25" height="24" viewBox="0 0 25 24">
<path d="M0 0H19L24 5V24H0Z" fill="#8c8c8c"/>
<rect x="6" y="0" width="12" height="8" fill="#fff"/><rect x="13" y="3" width="3" height="3" fill="#8c8c8c"/>
<rect x="3" y="13" width="18" height="10" fill="#fff"/><rect x="6" y="16" width="8" height="1.6" fill="#8c8c8c"/><rect x="6" y="19.5" width="11" height="1.6" fill="#8c8c8c"/>
<rect x="21.5" y="19.5" width="1.5" height="1.5" fill="#fff"/></svg>
<svg class="a" style="left:125px;top:40px" width="7" height="4"><path d="M0 0H6.5L3.25 3.5Z" fill="#1a2633"/></svg>
<svg class="a" style="left:153px;top:30px" width="24" height="21" viewBox="0 0 24 21">
<path d="M5.5 0.6H15L18.5 4V8H5.5Z" fill="#fff" stroke="#8c8c8c" stroke-width="1.3"/>
<path d="M15 0.5V4H18.5" fill="#8c8c8c" stroke="#8c8c8c" stroke-width="1"/>
<rect x="0" y="7.5" width="24" height="9" rx="1" fill="#8c8c8c"/>
<rect x="1.5" y="9" width="1.6" height="1.6" fill="#fff"/><rect x="21" y="13" width="1.6" height="2" fill="#fff"/>
<rect x="5.5" y="11.5" width="13" height="9.5" fill="#8c8c8c"/><rect x="6.8" y="12.5" width="10.4" height="7.3" fill="#fff"/>
<rect x="7.5" y="14" width="9" height="1.7" fill="#8c8c8c"/><rect x="7.5" y="17" width="9" height="1.7" fill="#8c8c8c"/></svg>
<svg class="a" style="left:188px;top:40px" width="7" height="4"><path d="M0 0H6.5L3.25 3.5Z" fill="#1a2633"/></svg>
<svg class="a" style="left:210px;top:31px" width="24" height="20" viewBox="0 0 24 20"><path d="M1 9.8L12 0V6.2H23V13.8H12V19.8Z" fill="#8c8c8c"/></svg>
<svg class="a" style="left:249px;top:40px" width="7" height="4"><path d="M0 0H6.5L3.25 3.5Z" fill="#1a2633"/></svg>
<svg class="a" style="left:276px;top:29px" width="18" height="24" viewBox="0 0 18 24"><rect width="18" height="24" fill="#8c8c8c"/><rect x="3" y="3" width="12" height="3" fill="#fff"/><rect x="2.0" y="10.0" width="3.8" height="2" fill="#fff"/><rect x="7.2" y="10.0" width="3.8" height="2" fill="#fff"/><rect x="12.4" y="10.0" width="3.8" height="2" fill="#fff"/><rect x="2.0" y="14.0" width="3.8" height="2" fill="#fff"/><rect x="7.2" y="14.0" width="3.8" height="2" fill="#fff"/><rect x="12.4" y="14.0" width="3.8" height="2" fill="#fff"/><rect x="2.0" y="18.0" width="3.8" height="2" fill="#fff"/><rect x="7.2" y="18.0" width="3.8" height="2" fill="#fff"/><rect x="12.4" y="18.0" width="3.8" height="2" fill="#fff"/></svg>
<div class="a" style="left:1267px;top:27px;width:30px;height:26px;border:1px solid #d8d8d8;background:#ececec"></div>
<svg class="a" style="left:1274px;top:33px" width="16" height="15"><rect width="16" height="15" fill="#8e8e8e"/><path d="M0 0L8 8L16 0M0 15L6 7M16 15L10 7" stroke="#e0e0e0" stroke-width="1" fill="none"/></svg>
<div class="tab" style="left:2px;width:120px"><span style="left:4px;letter-spacing:-0.2px">Домашня сторінка</span></div>
<div class="tab" style="left:122px;width:58px"><span style="left:4px">Звіти</span><svg style="left:42px" width="9" height="8" viewBox="0 0 9 8"><path d="M0.8 0.6L8 7.4M8 0.6L0.8 7.4" stroke="#c00000" stroke-width="2.4"/></svg></div>
<div class="tab" style="left:180px;width:80px"><span style="left:4px">J0500107*</span><svg style="left:63px" width="9" height="8" viewBox="0 0 9 8"><path d="M0.8 0.6L8 7.4M8 0.6L0.8 7.4" stroke="#c00000" stroke-width="2.4"/></svg></div>
<div class="tab" style="left:343px;width:80px"><span style="left:4px">J0510107*</span><svg style="left:63px" width="9" height="8" viewBox="0 0 9 8"><path d="M0.8 0.6L8 7.4M8 0.6L0.8 7.4" stroke="#c00000" stroke-width="2.4"/></svg></div>
<div class="tab" style="left:423px;width:81px"><span style="left:4px">J0510107*</span><svg style="left:63px" width="9" height="8" viewBox="0 0 9 8"><path d="M0.8 0.6L8 7.4M8 0.6L0.8 7.4" stroke="#c00000" stroke-width="2.4"/></svg></div>
<div class="tab" style="left:504px;width:81px"><span style="left:4px">J0510407*</span><svg style="left:63px" width="9" height="8" viewBox="0 0 9 8"><path d="M0.8 0.6L8 7.4M8 0.6L0.8 7.4" stroke="#c00000" stroke-width="2.4"/></svg></div>
<div class="tab" style="left:585px;width:81px"><span style="left:4px">J0510407*</span><svg style="left:63px" width="9" height="8" viewBox="0 0 9 8"><path d="M0.8 0.6L8 7.4M8 0.6L0.8 7.4" stroke="#c00000" stroke-width="2.4"/></svg></div>
<div class="tab" style="left:666px;width:80px"><span style="left:4px">J0510407*</span><svg style="left:63px" width="9" height="8" viewBox="0 0 9 8"><path d="M0.8 0.6L8 7.4M8 0.6L0.8 7.4" stroke="#c00000" stroke-width="2.4"/></svg></div>
<div class="tab" style="left:260px;width:83px;top:60px;height:26px;background:#fff;border-top:2px solid #1aa3d8"><span style="left:5px;top:4px">J0510107*</span><svg style="left:66px;top:6px" width="9" height="8" viewBox="0 0 9 8"><path d="M0.8 0.6L8 7.4M8 0.6L0.8 7.4" stroke="#c00000" stroke-width="2.4"/></svg></div>
<div class="a" style="left:0;top:84px;width:260px;height:1px;background:#c8c8c8"></div>
<div class="a" style="left:343px;top:84px;width:944px;height:1px;background:#c8c8c8"></div>
<div class="a" style="left:0;top:120px;width:1287px;height:1px;background:#b9b9b9"></div>
<div class="a" style="left:0;top:85px;width:1px;height:773px;background:#c8c8c8"></div>
<div class="a" style="left:5px;top:146px;width:1282px;height:712px;border-left:2px solid #6a6a6a;border-top:2px solid #6a6a6a;background:#fff"></div>
<div class="a" style="left:7px;top:148px;width:15px;height:710px;background:#efefef"></div>
<div class="a" style="left:22px;top:148px;width:1px;height:710px;background:#dadada"></div>
<div class="a" style="left:4px;top:86px;width:112px;height:35px;border:4px solid #f00"></div>
<svg class="a" style="left:13px;top:91px" width="18" height="24" viewBox="0 0 18 24"><rect width="18" height="24" fill="#8c8c8c"/><rect x="3" y="3" width="12" height="3" fill="#fff"/><rect x="2.0" y="10.0" width="3.8" height="2" fill="#fff"/><rect x="7.2" y="10.0" width="3.8" height="2" fill="#fff"/><rect x="12.4" y="10.0" width="3.8" height="2" fill="#fff"/><rect x="2.0" y="14.0" width="3.8" height="2" fill="#fff"/><rect x="7.2" y="14.0" width="3.8" height="2" fill="#fff"/><rect x="12.4" y="14.0" width="3.8" height="2" fill="#fff"/><rect x="2.0" y="18.0" width="3.8" height="2" fill="#fff"/><rect x="7.2" y="18.0" width="3.8" height="2" fill="#fff"/><rect x="12.4" y="18.0" width="3.8" height="2" fill="#fff"/></svg>
<div class="tl" style="left:39px;top:98px">Розрахунок</div>
<svg class="a" style="left:118px;top:93px" width="26" height="20" viewBox="118 93 26 20"><path d="M118.8 103.4L122.3 100L128 105.5L139.5 94L143 97.4L128 112Z" fill="#9a9a9a"/></svg>
<div class="tl" style="left:147px;top:91px;width:73px;text-align:center;line-height:13px">Перевірка<br>коректності</div>
<svg class="a" style="left:230px;top:94px" width="26" height="18" viewBox="230 94 26 18">
<rect x="231" y="95" width="2" height="3.5" fill="#8c8c8c"/><rect x="231" y="101.3" width="2" height="3.3" fill="#8c8c8c"/><rect x="231" y="107.2" width="2" height="3.5" fill="#8c8c8c"/>
<path d="M235 99L239 102.8L235 106.7Z" fill="#8c8c8c"/>
<path d="M241.5 94.8H254L255 96V110.7H241.5Z" fill="#8c8c8c"/><rect x="244" y="96" width="2" height="14" fill="#fff"/>
<rect x="241" y="99" width="2.5" height="1.5" fill="#8c8c8c"/><rect x="241" y="103" width="2.5" height="1.5" fill="#8c8c8c"/><rect x="241" y="107.5" width="2.5" height="1.5" fill="#8c8c8c"/>
<rect x="248" y="99" width="5" height="1.8" rx="0.8" fill="#fff"/></svg>
<div class="tl" style="left:258px;top:91px;width:84px;text-align:center;line-height:13px">Консолідація<br>даних</div>
<svg class="a" style="left:357px;top:90px" width="18" height="26" viewBox="357 90 18 26">
<path d="M361.5 101V95.5Q361.5 92 366 92Q370.5 92 370.5 95.5V101" fill="none" stroke="#e2e2e2" stroke-width="3"/>
<rect x="358" y="101" width="16" height="14" fill="#e2e2e2"/><path d="M364.5 105.5H367.5V112.5H365.5Z" fill="#fff"/></svg>
<div class="tl" style="left:383px;top:98px;color:#808080;letter-spacing:-0.3px">Підписати</div>
<svg class="a" style="left:453px;top:96px" width="24" height="15" viewBox="0 0 24 15"><rect width="24" height="15" fill="#e3e3e3"/><path d="M0 0L12 8L24 0M0 15L9 6M24 15L15 6" stroke="#f4f4f4" stroke-width="1" fill="none"/></svg>
<div class="tl" style="left:481px;top:98px;color:#808080;letter-spacing:-0.3px">Відправити</div>
<svg class="a" style="left:556px;top:101px" width="9" height="5"><path d="M0 0H8L4 4.5Z" fill="#909090"/></svg>
<div class="a" style="left:567px;top:88px;width:129px;height:31px;border:4px solid #f00"></div>
<svg class="a" style="left:573px;top:94px" width="18" height="18"><rect x="0" y="0" width="8" height="8" fill="#8c8c8c"/><rect x="10" y="0" width="8" height="8" fill="#8c8c8c"/><rect x="0" y="10" width="8" height="8" fill="#8c8c8c"/><rect x="10" y="10" width="8" height="8" fill="#8c8c8c"/></svg>
<div class="tl" style="left:598px;top:98px;letter-spacing:0.45px">Додатково</div>
<svg class="a" style="left:672px;top:101px" width="9" height="5"><path d="M0 0H8.5L4.25 4.5Z" fill="#000"/></svg>
<div class="a" style="left:13px;top:127px;width:13px;height:13px;border:1px solid #8a8a8a;border-radius:2px;background:#fff"></div>
<svg class="a" style="left:14px;top:129px" width="11" height="10"><path d="M1.3 4.8L4.8 8.2L10 2.2" stroke="#1d6e99" stroke-width="2.6" fill="none"/></svg>
<div class="tl" style="left:30px;top:129px;letter-spacing:-0.15px">Автоматичний розрахунок</div>
<div class="a" style="left:35px;top:147px;width:1px;height:22px;background:#646464"></div>
<div class="a" style="left:102px;top:147px;width:1px;height:22px;background:#646464"></div>
<div class="a" style="left:357px;top:147px;width:1px;height:22px;background:#646464"></div>
<div class="a" style="left:35px;top:168px;width:1252px;height:1px;background:#646464"></div>
<div class="a" style="left:882px;top:149px;width:139px;height:14px;background:#fdf5dc;font-size:12.7px;line-height:15px;text-align:center;white-space:nowrap"><span style="display:inline-block;transform:scaleY(1.12);transform-origin:50% 77%"></span></div>
<div class="a" style="left:1025px;top:148px;width:18px;height:15px;border:1px solid #707070;background:linear-gradient(#f2f2f2,#dcdcdc)"></div>
<div class="a" style="left:1030px;top:159px;width:1px;height:1px;background:#444;box-shadow:3px 0 #444,6px 0 #444"></div>
<div class="t" style="left:859px;top:148px;font-size:12.7px;line-height:16px;transform:scaleY(1.12);transform-origin:50% 77%;">від</div>
<div class="t" style="left:1055px;top:148px;font-size:12.7px;line-height:16px;transform:scaleY(1.12);transform-origin:50% 77%;">№</div>
<div class="a" style="left:1073px;top:149px;width:160px;height:14px;background:#fdf5dc;font-size:12.7px;line-height:15px;text-align:center;white-space:nowrap"><span style="display:inline-block;transform:scaleY(1.12);transform-origin:50% 77%"></span></div>
<div class="t" style="left:463px;top:169px;font-size:12.7px;line-height:16px;transform:scaleY(1.12);transform-origin:50% 77%;">(повне найменування юридичної особи</div>
<div class="t" style="left:830px;top:169px;font-size:12.7px;line-height:16px;transform:scaleY(1.12);transform-origin:50% 77%;letter-spacing:-0.21px">платника єдиного внеску згідно з реєстраційними документами, дата та номер документа)</div>
<div class="a" style="left:35px;top:193px;width:1252px;height:1px;background:#646464"></div>
<div class="a" style="left:35px;top:217px;width:1252px;height:1px;background:#646464"></div>
<div class="a" style="left:35px;top:241px;width:1252px;height:1px;background:#646464"></div>
<div class="a" style="left:35px;top:265px;width:1252px;height:1px;background:#646464"></div>
<div class="a" style="left:102px;top:291px;width:1185px;height:1px;background:#646464"></div>
<div class="a" style="left:35px;top:317px;width:1252px;height:1px;background:#646464"></div>
<div class="a" style="left:35px;top:193px;width:1px;height:125px;background:#646464"></div>
<div class="a" style="left:102px;top:193px;width:1px;height:125px;background:#646464"></div>
<div class="a" style="left:1259px;top:193px;width:1px;height:73px;background:#646464"></div>
<div class="a" style="left:37px;top:194px;width:66px;height:23px;line-height:27px;text-align:center;font-size:12.7px"><span style="display:inline-block;transform:scaleY(1.12);transform-origin:50% 77%">031</span></div>
<div class="a" style="left:37px;top:218px;width:66px;height:23px;line-height:27px;text-align:center;font-size:12.7px"><span style="display:inline-block;transform:scaleY(1.12);transform-origin:50% 77%">033</span></div>
<div class="a" style="left:37px;top:242px;width:66px;height:23px;line-height:27px;text-align:center;font-size:12.7px"><span style="display:inline-block;transform:scaleY(1.12);transform-origin:50% 77%">034</span></div>
<div class="a" style="left:37px;top:266px;width:66px;height:51px;line-height:55px;text-align:center;font-size:12.7px"><span style="display:inline-block;transform:scaleY(1.12);transform-origin:50% 77%">035</span></div>
<div class="t" style="left:106px;top:199.7px;font-size:12.7px;line-height:16px;transform:scaleY(1.12);transform-origin:50% 77%;letter-spacing:0.1px">Податковий номер<span style="font-size:9px;vertical-align:5px;line-height:0">6</span> або серія (за наявності) та номер паспорта<span style="font-size:9px;vertical-align:5px;line-height:0">7</span> платника єдиного внеску</div>
<div class="t" style="left:106px;top:223.7px;font-size:12.7px;line-height:16px;transform:scaleY(1.12);transform-origin:50% 77%;letter-spacing:0.14px">Податковий номер ліквідованого платника єдиного внеску (заповнюється у разі подання платником єдиного внеску</div>
<div class="t" style="left:106px;top:247.7px;font-size:12.7px;line-height:16px;transform:scaleY(1.12);transform-origin:50% 77%;letter-spacing:0.15px">Код філії (заповнюється у разі подання платником єдиного внеску відомостей про філії</div>
<div class="t" style="left:600px;width:521px;top:223.7px;font-size:12.7px;line-height:16px;text-align:right;transform:scaleY(1.12);transform-origin:50% 77%">при поданні розрахунку з типом "Уточнюючий"<span style="font-size:9px;vertical-align:5px;line-height:0">8</span>)</div>
<div class="t" style="left:600px;width:331px;top:247.7px;font-size:12.7px;line-height:16px;text-align:right;transform:scaleY(1.12);transform-origin:50% 77%">з типом "Уточнюючий"<span style="font-size:9px;vertical-align:5px;line-height:0">9</span>)</div>
<div class="t" style="left:106px;top:273.7px;font-size:12.7px;line-height:16px;transform:scaleY(1.12);transform-origin:50% 77%;">для призначення пенсії <span style="font-size:9px;vertical-align:5px;line-height:0">10</span></div>
<div class="t" style="left:106px;top:299.5px;font-size:12.7px;line-height:16px;transform:scaleY(1.12);transform-origin:50% 77%;">для призначення інших соціальних виплат <span style="font-size:9px;vertical-align:5px;line-height:0">11</span></div>
<div class="a" style="left:1263px;top:197px;width:24px;height:17px;background:#fdf5dc;font-size:12.7px;line-height:18px;text-align:center;white-space:nowrap"><span style="display:inline-block;transform:scaleY(1.12);transform-origin:50% 77%"></span></div>
<div class="a" style="left:1263px;top:221px;width:24px;height:17px;background:#fdf5dc;font-size:12.7px;line-height:18px;text-align:center;white-space:nowrap"><span style="display:inline-block;transform:scaleY(1.12);transform-origin:50% 77%"></span></div>
<div class="a" style="left:1263px;top:245px;width:24px;height:17px;background:#fdf5dc;font-size:12.7px;line-height:18px;text-align:center;white-space:nowrap"><span style="display:inline-block;transform:scaleY(1.12);transform-origin:50% 77%"></span></div>
<div class="a" style="left:35px;top:334px;width:1252px;height:1px;background:#646464"></div>
<div class="a" style="left:35px;top:334px;width:1px;height:442px;background:#646464"></div>
<div class="a" style="left:68px;top:334px;width:1px;height:442px;background:#646464"></div>
<div class="a" style="left:136px;top:334px;width:1px;height:442px;background:#646464"></div>
<div class="a" style="left:204px;top:334px;width:1px;height:442px;background:#646464"></div>
<div class="a" style="left:426px;top:334px;width:1px;height:169px;background:#646464"></div>
<div class="a" style="left:511px;top:334px;width:1px;height:169px;background:#646464"></div>
<div class="a" style="left:596px;top:334px;width:1px;height:169px;background:#646464"></div>
<div class="a" style="left:766px;top:334px;width:1px;height:442px;background:#646464"></div>
<div class="a" style="left:885px;top:334px;width:1px;height:442px;background:#646464"></div>
<div class="a" style="left:1038px;top:334px;width:1px;height:442px;background:#646464"></div>
<div class="a" style="left:1208px;top:334px;width:1px;height:442px;background:#646464"></div>
<div class="a" style="left:204px;top:503px;width:834px;height:1px;background:#646464"></div>
<div class="a" style="left:1038px;top:471px;width:170px;height:1px;background:#646464"></div>
<div class="a" style="left:1038px;top:503px;width:170px;height:1px;background:#646464"></div>
<div class="a" style="left:1038px;top:640px;width:170px;height:1px;background:#646464"></div>
<div class="a" style="left:1140px;top:471px;width:1px;height:32px;background:#646464"></div>
<div class="a" style="left:1140px;top:640px;width:1px;height:24px;background:#646464"></div>
<div class="a" style="left:1208px;top:640px;width:79px;height:1px;background:#646464"></div>
<div class="a" style="left:35px;top:664px;width:1252px;height:2px;background:#1c1c1c"></div>
<div class="a" style="left:35px;top:719px;width:1252px;height:2px;background:#1c1c1c"></div>
<div class="a" style="left:35px;top:774px;width:1252px;height:2px;background:#1c1c1c"></div>
<div class="a" style="left:36px;top:479.07px;width:32px;text-align:center;font-size:13.3px;line-height:14.286px;font-weight:bold;white-space:nowrap;transform:scaleY(1.12);transform-origin:50% 50%">04.<br>№<br>з/п</div>
<div class="a" style="left:68px;top:457.64px;width:68px;text-align:center;font-size:13.3px;line-height:14.286px;font-weight:bold;white-space:nowrap;transform:scaleY(1.12);transform-origin:50% 50%">05.<br>Грома-<br>дянин<br>України<br>(1 - так,<br>0 - ні)</div>
<div class="a" style="left:136px;top:464.79px;width:68px;text-align:center;font-size:13.3px;line-height:14.286px;font-weight:bold;white-space:nowrap;transform:scaleY(1.12);transform-origin:50% 50%">06.<br>Жінка -<br>Ж,<br>чоловік -<br>Ч</div>
<div class="a" style="left:204px;top:370.50px;width:222px;text-align:center;font-size:13.3px;line-height:14.286px;font-weight:bold;white-space:nowrap;transform:scaleY(1.12);transform-origin:50% 50%">07.Реєстраційний номер<br>облікової картки платника<br>податків або серія (за<br>наявності) та номер паспорта<br>за формою<br>БКNNXXXXXX/ПXXXXXXXXX*<br>ЗО<span style="font-size:9.5px;vertical-align:5px;line-height:0">12</span></div>
<div class="a" style="left:426px;top:399.07px;width:85px;text-align:center;font-size:13.3px;line-height:14.286px;font-weight:bold;white-space:nowrap;transform:scaleY(1.12);transform-origin:50% 50%">08. Код<br>категорії<br>ЗО<span style="font-size:9.5px;vertical-align:5px;line-height:0">13</span></div>
<div class="a" style="left:511px;top:390.93px;width:85px;text-align:center;font-size:13.3px;line-height:14.286px;font-weight:bold;white-space:nowrap;transform:scaleY(1.12);transform-origin:50% 50%">09. Код<br>типу<br>нараху-<br>вань<span style="font-size:9.5px;vertical-align:5px;line-height:0">14</span></div>
<div class="a" style="left:596px;top:399.07px;width:170px;text-align:center;font-size:13.3px;line-height:14.286px;font-weight:bold;white-space:nowrap;transform:scaleY(1.12);transform-origin:50% 50%">10. Місяць та рік, за<br>який проведено<br>нарахування<span style="font-size:9.5px;vertical-align:5px;line-height:0">15</span></div>
<div class="a" style="left:766px;top:383.79px;width:119px;text-align:center;font-size:13.3px;line-height:14.286px;font-weight:bold;white-space:nowrap;transform:scaleY(1.12);transform-origin:50% 50%">12. Кількість<br>календарних<br>днів тимчасової<br>непра-<br>цездатності</div>
<div class="a" style="left:885px;top:348.07px;width:153px;text-align:center;font-size:13.3px;line-height:14.286px;font-weight:bold;white-space:nowrap;transform:scaleY(1.12);transform-origin:50% 50%">14. Кількість<br>календарних днів<br>перебування у<br>трудових / цивільно-<br>правових<br>відносинах,<br>проходження<br>військової служби<br>протягом звітного<br>місяця</div>
<div class="a" style="left:1038px;top:361.14px;width:170px;text-align:center;font-size:13.3px;line-height:14.286px;font-weight:bold;white-space:nowrap;transform:scaleY(1.12);transform-origin:50% 50%">16. Загальна сума<br>нарахованої заробітної<br>плати / доходу,<br>грошового збезпечення<br>(усього з початку<br>звітного місяця)</div>
<div class="a" style="left:1038px;top:482.86px;width:102px;text-align:center;font-size:13.3px;line-height:14.286px;font-weight:bold;white-space:nowrap;transform:scaleY(1.12);transform-origin:50% 50%">грн</div>
<div class="a" style="left:1140px;top:482.86px;width:68px;text-align:center;font-size:13.3px;line-height:14.286px;font-weight:bold;white-space:nowrap;transform:scaleY(1.12);transform-origin:50% 50%">коп.</div>
<div class="a" style="left:204px;top:579.36px;width:562px;text-align:center;font-size:13.3px;line-height:14.286px;font-weight:bold;white-space:nowrap;transform:scaleY(1.12);transform-origin:50% 50%">11. Прізвище, ім'я, по батькові ЗО</div>
<div class="a" style="left:766px;top:542.64px;width:119px;text-align:center;font-size:13.3px;line-height:14.286px;font-weight:bold;white-space:nowrap;transform:scaleY(1.12);transform-origin:50% 50%">13. Кількість<br>календарних<br>днів без<br>збереження<br>заробітної<br>плати<span style="font-size:9.5px;vertical-align:5px;line-height:0">16</span></div>
<div class="a" style="left:885px;top:549.79px;width:153px;text-align:center;font-size:13.3px;line-height:14.286px;font-weight:bold;white-space:nowrap;transform:scaleY(1.12);transform-origin:50% 50%">15. Кількість<br>календарних днів<br>відпустки у звʼязку з<br>вагітністю та<br>пологами</div>
<div class="a" style="left:1038px;top:515.36px;width:170px;text-align:center;font-size:13.3px;line-height:14.286px;font-weight:bold;white-space:nowrap;transform:scaleY(1.12);transform-origin:50% 50%">17. Сума нарахованої<br>заробітної плати/<br>доходу/ грошового<br>забезпечення у межах<br>максимальної<br>величини, на яку<br>нараховується єдиний<br>внесок</div>
<div class="a" style="left:1038px;top:648.36px;width:102px;text-align:center;font-size:13.3px;line-height:14.286px;font-weight:bold;white-space:nowrap;transform:scaleY(1.12);transform-origin:50% 50%">грн</div>
<div class="a" style="left:1140px;top:648.36px;width:68px;text-align:center;font-size:13.3px;line-height:14.286px;font-weight:bold;white-space:nowrap;transform:scaleY(1.12);transform-origin:50% 50%">коп.</div>
<div class="a" style="left:1208px;top:648.36px;width:172px;text-align:center;font-size:13.3px;line-height:14.286px;font-weight:bold;white-space:nowrap;transform:scaleY(1.12);transform-origin:50% 50%">грн</div>
<div class="t" style="left:1227.7px;top:369.1px;font-size:13.3px;line-height:16px;font-weight:bold;transform:scaleY(1.12);transform-origin:50% 50%">18. Сума різниці</div>
<div class="t" style="left:1222.2px;top:385.1px;font-size:13.3px;line-height:16px;font-weight:bold;transform:scaleY(1.12);transform-origin:50% 50%">розміром мінімальної</div>
<div class="t" style="left:1229.4px;top:401.1px;font-size:13.3px;line-height:16px;font-weight:bold;transform:scaleY(1.12);transform-origin:50% 50%">заробітної плати</div>
<div class="t" style="left:1213.7px;top:417.2px;font-size:13.3px;line-height:16px;font-weight:bold;transform:scaleY(1.12);transform-origin:50% 50%">фактично нарахованої</div>
<div class="t" style="left:1219.6px;top:433.2px;font-size:13.3px;line-height:16px;font-weight:bold;transform:scaleY(1.12);transform-origin:50% 50%">заробітної плати за</div>
<div class="t" style="left:1235.2px;top:449.2px;font-size:13.3px;line-height:16px;font-weight:bold;transform:scaleY(1.12);transform-origin:50% 50%">звітний місяць</div>
<div class="t" style="left:1234.3px;top:465.2px;font-size:13.3px;line-height:16px;font-weight:bold;transform:scaleY(1.12);transform-origin:50% 50%">заробітної плати</div>
<div class="t" style="left:1232.0px;top:481.2px;font-size:13.3px;line-height:16px;font-weight:bold;transform:scaleY(1.12);transform-origin:50% 50%">доходу/ грошового</div>
<div class="t" style="left:1215.7px;top:497.3px;font-size:13.3px;line-height:16px;font-weight:bold;transform:scaleY(1.12);transform-origin:50% 50%">забезпечення</div>
<div class="t" style="left:1239.8px;top:513.3px;font-size:13.3px;line-height:16px;font-weight:bold;transform:scaleY(1.12);transform-origin:50% 50%">до мінімального</div>
<div class="t" style="left:1218.9px;top:529.3px;font-size:13.3px;line-height:16px;font-weight:bold;transform:scaleY(1.12);transform-origin:50% 50%">страхового внеску</div>
<div class="t" style="left:1237.5px;top:545.3px;font-size:13.3px;line-height:16px;font-weight:bold;transform:scaleY(1.12);transform-origin:50% 50%">сума мінімальної</div>
<div class="t" style="left:1224.5px;top:561.3px;font-size:13.3px;line-height:16px;font-weight:bold;transform:scaleY(1.12);transform-origin:50% 50%">заробітної плати</div>
<div class="t" style="left:1264.6px;top:577.4px;font-size:13.3px;line-height:16px;font-weight:bold;transform:scaleY(1.12);transform-origin:50% 50%">категорії</div>
<div class="t" style="left:1219.6px;top:593.4px;font-size:13.3px;line-height:16px;font-weight:bold;transform:scaleY(1.12);transform-origin:50% 50%">застрахованої особи</div>
<div class="a" style="left:204px;top:692px;width:834px;height:1px;background:#646464"></div>
<div class="a" style="left:1038px;top:692px;width:170px;height:1px;background:#646464"></div>
<div class="a" style="left:511px;top:666px;width:1px;height:26px;background:#646464"></div>
<div class="a" style="left:681px;top:666px;width:1px;height:26px;background:#646464"></div>
<div class="a" style="left:72px;top:682px;width:60px;height:21px;border-top:2px solid #6d6d6d;border-left:2px solid #6d6d6d;border-right:1px solid #e3e3e3;border-bottom:1px solid #e3e3e3;background:linear-gradient(to right,#fdf5dc 0,#fdf5dc 38px,#f3f3f3 38px)"></div>
<div class="t" style="left:76px;top:686px;font-size:12.7px;line-height:16px;transform:scaleY(1.12);transform-origin:50% 77%">так</div>
<div class="a" style="left:112px;top:684px;width:18px;height:18px;border:1px solid #707070;background:#ebebeb"></div>
<svg class="a" style="left:115px;top:689px" width="13" height="8"><path d="M1.5 1.5L6.5 6.2L11.5 1.5" stroke="#000" stroke-width="2.2" fill="none"/></svg>
<div class="a" style="left:140px;top:682px;width:60px;height:21px;border-top:2px solid #6d6d6d;border-left:2px solid #6d6d6d;border-right:1px solid #e3e3e3;border-bottom:1px solid #e3e3e3;background:linear-gradient(to right,#fdf5dc 0,#fdf5dc 38px,#f3f3f3 38px)"></div>
<div class="t" style="left:144px;top:686px;font-size:12.7px;line-height:16px;transform:scaleY(1.12);transform-origin:50% 77%">Ч</div>
<div class="a" style="left:180px;top:684px;width:18px;height:18px;border:1px solid #707070;background:#ebebeb"></div>
<svg class="a" style="left:183px;top:689px" width="13" height="8"><path d="M1.5 1.5L6.5 6.2L11.5 1.5" stroke="#000" stroke-width="2.2" fill="none"/></svg>
<div class="a" style="left:209px;top:671px;width:195px;height:17px;background:#fdf5dc;font-size:12.7px;line-height:18px;text-align:center;white-space:nowrap"><span style="display:inline-block;transform:scaleY(1.12);transform-origin:50% 77%">БКЯЯ999998</span></div>
<div class="a" style="left:404px;top:670px;width:18px;height:18px;border:1px solid #707070;background:linear-gradient(#f2f2f2,#dcdcdc)"></div>
<div class="a" style="left:409px;top:681px;width:1px;height:1px;background:#444;box-shadow:3px 0 #444,6px 0 #444"></div>
<div class="a" style="left:430px;top:671px;width:59px;height:17px;background:#fdf5dc;font-size:12.7px;line-height:18px;text-align:center;white-space:nowrap"><span style="display:inline-block;transform:scaleY(1.12);transform-origin:50% 77%">1</span></div>
<div class="a" style="left:489px;top:670px;width:18px;height:18px;border:1px solid #707070;background:linear-gradient(#f2f2f2,#dcdcdc)"></div>
<div class="a" style="left:494px;top:681px;width:1px;height:1px;background:#444;box-shadow:3px 0 #444,6px 0 #444"></div>
<div class="a" style="left:515px;top:671px;width:59px;height:17px;background:#fdf5dc;font-size:12.7px;line-height:18px;text-align:center;white-space:nowrap"><span style="display:inline-block;transform:scaleY(1.12);transform-origin:50% 77%"></span></div>
<div class="a" style="left:574px;top:670px;width:18px;height:18px;border:1px solid #707070;background:linear-gradient(#f2f2f2,#dcdcdc)"></div>
<div class="a" style="left:579px;top:681px;width:1px;height:1px;background:#444;box-shadow:3px 0 #444,6px 0 #444"></div>
<div class="a" style="left:600px;top:671px;width:78px;height:17px;background:#fdf5dc;font-size:12.7px;line-height:18px;text-align:center;white-space:nowrap"><span style="display:inline-block;transform:scaleY(1.12);transform-origin:50% 77%">10</span></div>
<div class="a" style="left:685px;top:671px;width:78px;height:17px;background:#fdf5dc;font-size:12.7px;line-height:18px;text-align:center;white-space:nowrap"><span style="display:inline-block;transform:scaleY(1.12);transform-origin:50% 77%">2021</span></div>
<div class="a" style="left:770px;top:671px;width:112px;height:17px;background:#fdf5dc;font-size:12.7px;line-height:18px;text-align:center;white-space:nowrap"><span style="display:inline-block;transform:scaleY(1.12);transform-origin:50% 77%"></span></div>
<div class="a" style="left:889px;top:671px;width:146px;height:17px;background:#fdf5dc;font-size:12.7px;line-height:18px;text-align:center;white-space:nowrap"><span style="display:inline-block;transform:scaleY(1.12);transform-origin:50% 77%">31</span></div>
<div class="a" style="left:1042px;top:671px;width:163px;height:17px;background:#fdf5dc;font-size:12.7px;line-height:18px;text-align:center;white-space:nowrap"><span style="display:inline-block;transform:scaleY(1.12);transform-origin:50% 77%"></span></div>
<div class="a" style="left:210px;top:698px;width:214px;height:17px;background:#fdf5dc;font-size:12.7px;line-height:18px;text-align:center;white-space:nowrap"><span style="display:inline-block;transform:scaleY(1.12);transform-origin:50% 77%">Нестеренко</span></div>
<div class="a" style="left:430px;top:698px;width:163px;height:17px;background:#fdf5dc;font-size:12.7px;line-height:18px;text-align:center;white-space:nowrap"><span style="display:inline-block;transform:scaleY(1.12);transform-origin:50% 77%">Володимир</span></div>
<div class="a" style="left:600px;top:698px;width:163px;height:17px;background:#fdf5dc;font-size:12.7px;line-height:18px;text-align:center;white-space:nowrap"><span style="display:inline-block;transform:scaleY(1.12);transform-origin:50% 77%">Борисович</span></div>
<div class="a" style="left:770px;top:698px;width:112px;height:17px;background:#fdf5dc;font-size:12.7px;line-height:18px;text-align:center;white-space:nowrap"><span style="display:inline-block;transform:scaleY(1.12);transform-origin:50% 77%"></span></div>
<div class="a" style="left:889px;top:698px;width:146px;height:17px;background:#fdf5dc;font-size:12.7px;line-height:18px;text-align:center;white-space:nowrap"><span style="display:inline-block;transform:scaleY(1.12);transform-origin:50% 77%"></span></div>
<div class="a" style="left:1042px;top:698px;width:163px;height:17px;background:#fdf5dc;font-size:12.7px;line-height:18px;text-align:center;white-space:nowrap"><span style="display:inline-block;transform:scaleY(1.12);transform-origin:50% 77%"></span></div>
<div class="a" style="left:1212px;top:684px;width:75px;height:17px;background:#fdf5dc;font-size:12.7px;line-height:18px;text-align:center;white-space:nowrap"><span style="display:inline-block;transform:scaleY(1.12);transform-origin:50% 77%"></span></div>
<div class="a" style="left:204px;top:747px;width:834px;height:1px;background:#646464"></div>
<div class="a" style="left:1038px;top:747px;width:170px;height:1px;background:#646464"></div>
<div class="a" style="left:511px;top:721px;width:1px;height:26px;background:#646464"></div>
<div class="a" style="left:681px;top:721px;width:1px;height:26px;background:#646464"></div>
<div class="a" style="left:72px;top:737px;width:60px;height:21px;border-top:2px solid #6d6d6d;border-left:2px solid #6d6d6d;border-right:1px solid #e3e3e3;border-bottom:1px solid #e3e3e3;background:linear-gradient(to right,#fdf5dc 0,#fdf5dc 38px,#f3f3f3 38px)"></div>
<div class="t" style="left:76px;top:741px;font-size:12.7px;line-height:16px;transform:scaleY(1.12);transform-origin:50% 77%">так</div>
<div class="a" style="left:112px;top:739px;width:18px;height:18px;border:1px solid #707070;background:#ebebeb"></div>
<svg class="a" style="left:115px;top:744px" width="13" height="8"><path d="M1.5 1.5L6.5 6.2L11.5 1.5" stroke="#000" stroke-width="2.2" fill="none"/></svg>
<div class="a" style="left:140px;top:737px;width:60px;height:21px;border-top:2px solid #6d6d6d;border-left:2px solid #6d6d6d;border-right:1px solid #e3e3e3;border-bottom:1px solid #e3e3e3;background:linear-gradient(to right,#fdf5dc 0,#fdf5dc 38px,#f3f3f3 38px)"></div>
<div class="t" style="left:144px;top:741px;font-size:12.7px;line-height:16px;transform:scaleY(1.12);transform-origin:50% 77%">Ч</div>
<div class="a" style="left:180px;top:739px;width:18px;height:18px;border:1px solid #707070;background:#ebebeb"></div>
<svg class="a" style="left:183px;top:744px" width="13" height="8"><path d="M1.5 1.5L6.5 6.2L11.5 1.5" stroke="#000" stroke-width="2.2" fill="none"/></svg>
<div class="a" style="left:209px;top:726px;width:195px;height:17px;background:#fdf5dc;font-size:12.7px;line-height:18px;text-align:center;white-space:nowrap"><span style="display:inline-block;transform:scaleY(1.12);transform-origin:50% 77%">1010101016</span></div>
<div class="a" style="left:404px;top:725px;width:18px;height:18px;border:1px solid #707070;background:linear-gradient(#f2f2f2,#dcdcdc)"></div>
<div class="a" style="left:409px;top:736px;width:1px;height:1px;background:#444;box-shadow:3px 0 #444,6px 0 #444"></div>
<div class="a" style="left:430px;top:726px;width:59px;height:17px;background:#fdf5dc;font-size:12.7px;line-height:18px;text-align:center;white-space:nowrap"><span style="display:inline-block;transform:scaleY(1.12);transform-origin:50% 77%">1</span></div>
<div class="a" style="left:489px;top:725px;width:18px;height:18px;border:1px solid #707070;background:linear-gradient(#f2f2f2,#dcdcdc)"></div>
<div class="a" style="left:494px;top:736px;width:1px;height:1px;background:#444;box-shadow:3px 0 #444,6px 0 #444"></div>
<div class="a" style="left:515px;top:726px;width:59px;height:17px;background:#fdf5dc;font-size:12.7px;line-height:18px;text-align:center;white-space:nowrap"><span style="display:inline-block;transform:scaleY(1.12);transform-origin:50% 77%"></span></div>
<div class="a" style="left:574px;top:725px;width:18px;height:18px;border:1px solid #707070;background:linear-gradient(#f2f2f2,#dcdcdc)"></div>
<div class="a" style="left:579px;top:736px;width:1px;height:1px;background:#444;box-shadow:3px 0 #444,6px 0 #444"></div>
<div class="a" style="left:600px;top:726px;width:78px;height:17px;background:#fdf5dc;font-size:12.7px;line-height:18px;text-align:center;white-space:nowrap"><span style="display:inline-block;transform:scaleY(1.12);transform-origin:50% 77%">10</span></div>
<div class="a" style="left:685px;top:726px;width:78px;height:17px;background:#fdf5dc;font-size:12.7px;line-height:18px;text-align:center;white-space:nowrap"><span style="display:inline-block;transform:scaleY(1.12);transform-origin:50% 77%">2021</span></div>
<div class="a" style="left:770px;top:726px;width:112px;height:17px;background:#fdf5dc;font-size:12.7px;line-height:18px;text-align:center;white-space:nowrap"><span style="display:inline-block;transform:scaleY(1.12);transform-origin:50% 77%"></span></div>
<div class="a" style="left:889px;top:726px;width:146px;height:17px;background:#fdf5dc;font-size:12.7px;line-height:18px;text-align:center;white-space:nowrap"><span style="display:inline-block;transform:scaleY(1.12);transform-origin:50% 77%">31</span></div>
<div class="a" style="left:1042px;top:726px;width:163px;height:17px;background:#fdf5dc;font-size:12.7px;line-height:18px;text-align:center;white-space:nowrap"><span style="display:inline-block;transform:scaleY(1.12);transform-origin:50% 77%"></span></div>
<div class="a" style="left:210px;top:753px;width:214px;height:17px;background:#fdf5dc;font-size:12.7px;line-height:18px;text-align:center;white-space:nowrap"><span style="display:inline-block;transform:scaleY(1.12);transform-origin:50% 77%">Сухаренко</span></div>
<div class="a" style="left:430px;top:753px;width:163px;height:17px;background:#fdf5dc;font-size:12.7px;line-height:18px;text-align:center;white-space:nowrap"><span style="display:inline-block;transform:scaleY(1.12);transform-origin:50% 77%">Олег</span></div>
<div class="a" style="left:600px;top:753px;width:163px;height:17px;background:#fdf5dc;font-size:12.7px;line-height:18px;text-align:center;white-space:nowrap"><span style="display:inline-block;transform:scaleY(1.12);transform-origin:50% 77%">Андрійович</span></div>
<div class="a" style="left:770px;top:753px;width:112px;height:17px;background:#fdf5dc;font-size:12.7px;line-height:18px;text-align:center;white-space:nowrap"><span style="display:inline-block;transform:scaleY(1.12);transform-origin:50% 77%"></span></div>
<div class="a" style="left:889px;top:753px;width:146px;height:17px;background:#fdf5dc;font-size:12.7px;line-height:18px;text-align:center;white-space:nowrap"><span style="display:inline-block;transform:scaleY(1.12);transform-origin:50% 77%"></span></div>
<div class="a" style="left:1042px;top:753px;width:163px;height:17px;background:#fdf5dc;font-size:12.7px;line-height:18px;text-align:center;white-space:nowrap"><span style="display:inline-block;transform:scaleY(1.12);transform-origin:50% 77%"></span></div>
<div class="a" style="left:1212px;top:739px;width:75px;height:17px;background:#fdf5dc;font-size:12.7px;line-height:18px;text-align:center;white-space:nowrap"><span style="display:inline-block;transform:scaleY(1.12);transform-origin:50% 77%"></span></div>
<div class="a" style="left:1061px;top:667px;width:121px;height:24px;border:4px solid #f00"></div>
<div class="a" style="left:39px;top:778px;width:106px;height:18px;border:1px solid #8f8f8f;background:linear-gradient(#f3f3f3,#dcdcdc)"></div>
<div class="t" style="left:39px;top:781px;width:106px;text-align:center;font-size:11px;line-height:12px;color:#000">Додати рядок</div>
<div class="a" style="left:35px;top:797px;width:1252px;height:1px;background:#646464"></div>
<div class="a" style="left:35px;top:845px;width:1252px;height:1px;background:#646464"></div>
<div class="a" style="left:35px;top:797px;width:1px;height:49px;background:#646464"></div>
<div class="a" style="left:1038px;top:797px;width:1px;height:49px;background:#646464"></div>
<div class="a" style="left:1208px;top:797px;width:1px;height:49px;background:#646464"></div>
<div class="a" style="left:1038px;top:821px;width:170px;height:1px;background:#646464"></div>
<div class="a" style="left:36px;top:816.36px;width:1002px;text-align:center;font-size:13.3px;line-height:14.286px;font-weight:bold;white-space:nowrap;transform:scaleY(1.12);transform-origin:50% 50%">Усього</div>
<div class="a" style="left:1042px;top:801px;width:163px;height:17px;background:#fdf5dc;font-size:12.7px;line-height:18px;text-align:center;white-space:nowrap"><span style="display:inline-block;transform:scaleY(1.12);transform-origin:50% 77%"></span></div>
<div class="a" style="left:1042px;top:825px;width:163px;height:18px;background:#fdf5dc;font-size:12.7px;line-height:19px;text-align:center;white-space:nowrap"><span style="display:inline-block;transform:scaleY(1.12);transform-origin:50% 77%"></span></div>
<div class="a" style="left:1212px;top:813px;width:75px;height:17px;background:#fdf5dc;font-size:12.7px;line-height:18px;text-align:center;white-space:nowrap"><span style="display:inline-block;transform:scaleY(1.12);transform-origin:50% 77%"></span></div>
<div class="a" style="left:568px;top:120px;width:275px;height:268px;border:1px solid #c4c4c4;border-top-color:#ececec;background:#f0f0f0;box-shadow:2px 2px 2px rgba(0,0,0,0.35)"></div>
<div class="a" style="left:571px;top:188px;width:269px;height:22px;background:#6fc6f5"></div>
<div class="a" style="left:600px;top:213px;width:240px;height:1px;background:#d7d7d7"></div>
<div class="a" style="left:600px;top:286px;width:240px;height:1px;background:#d7d7d7"></div>
<div class="a" style="left:600px;top:360px;width:240px;height:1px;background:#d7d7d7"></div>
<div class="mi" style="top:122px;line-height:22px">Створити</div>
<svg class="a" style="left:826px;top:128px" width="6" height="9"><path d="M1 1L4.5 4.5L1 8" stroke="#333" stroke-width="1.2" fill="none"/></svg>
<div class="mi" style="top:144px;line-height:22px">Імпорт з DBF</div>
<div class="mi" style="top:166px;line-height:22px">Імпорт з CSV-файлу</div>
<div class="mi" style="top:189px;line-height:22px">Імпорт з довідника працівників</div>
<div class="mi" style="top:218px;line-height:22px">Очистити документ</div>
<div class="mi" style="top:240px;line-height:22px">Виправити формати значень</div>
<div class="mi" style="top:262px;line-height:22px">Оновити поля документу</div>
<div class="mi" style="top:291px;line-height:22px">Експорт</div>
<svg class="a" style="left:826px;top:297px" width="6" height="9"><path d="M1 1L4.5 4.5L1 8" stroke="#333" stroke-width="1.2" fill="none"/></svg>
<div class="mi" style="top:313px;line-height:22px">Журнал</div>
<div class="mi" style="top:335px;line-height:22px">Експорт працівників до довідника</div>
<div class="mi" style="top:364px;line-height:22px">Властивості...</div>
</div></body></html>
